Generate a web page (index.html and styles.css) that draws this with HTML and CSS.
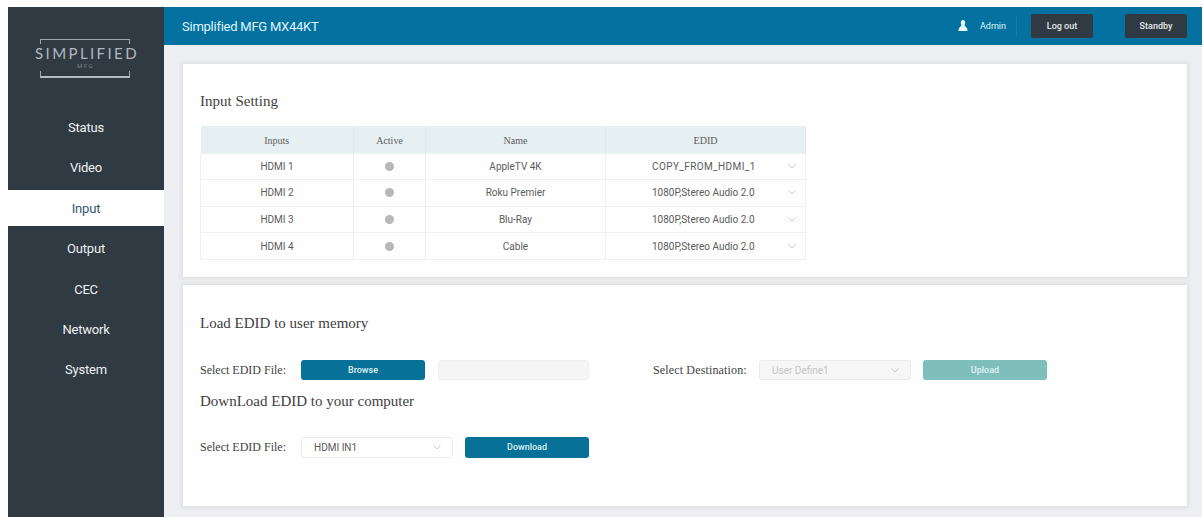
FILE: index.html
```html
<!DOCTYPE html>
<html lang="en">
<head>
    <meta charset="UTF-8">
    <meta name="viewport" content="width=device-width, initial-scale=1.0">
    <title>Simplified MFG MX44KT</title>
    <link rel="stylesheet" href="styles.css">
</head>
<body>
    <div class="app">
        <aside class="sidebar">
            <div class="logo">
                <div class="bracket bracket-top"></div>
                <div class="logo-name">SIMPLIFIED</div>
                <div class="logo-sub">MFG</div>
                <div class="bracket bracket-bottom"></div>
            </div>
            <nav class="menu">
                <a class="menu-item">Status</a>
                <a class="menu-item">Video</a>
                <a class="menu-item active">Input</a>
                <a class="menu-item">Output</a>
                <a class="menu-item">CEC</a>
                <a class="menu-item">Network</a>
                <a class="menu-item">System</a>
            </nav>
        </aside>

        <div class="main">
            <header class="topbar">
                <div class="title">Simplified MFG MX44KT</div>
                <svg class="user-icon" width="10" height="12" viewBox="0 0 10 12">
                    <path d="M5 0C3.500 0 2.800 1.100 2.800 2.500c0 1.200.5 2 .7 2.700L1.200 8C.6 8.800.5 10 .5 11h9c0-1-.1-2.200-.7-3L6.500 5.200c.2-.7.7-1.500.7-2.700C7.200 1.100 6.500 0 5 0z" fill="#e4f8fb"/>
                </svg>
                <span class="user-name">Admin</span>
                <button class="top-btn">Log out</button>
                <button class="top-btn standby">Standby</button>
            </header>

            <div class="content">
                <section class="card input-card">
                    <h2>Input Setting</h2>
                    <table class="input-table">
                        <colgroup>
                            <col class="col-input">
                            <col class="col-active">
                            <col class="col-name">
                            <col class="col-edid">
                        </colgroup>
                        <thead>
                            <tr><th>Inputs</th><th>Active</th><th>Name</th><th>EDID</th></tr>
                        </thead>
                        <tbody>
                            <tr>
                                <td>HDMI 1</td>
                                <td><span class="dot"></span></td>
                                <td>AppleTV 4K</td>
                                <td><div class="edid"><span class="copy">COPY_FROM_HDMI_1</span><svg class="chevron" width="8" height="5" viewBox="0 0 8 5"><path d="M0.500 0.500L4 4l3.500-3.500"/></svg></div></td>
                            </tr>
                            <tr>
                                <td>HDMI 2</td>
                                <td><span class="dot"></span></td>
                                <td>Roku Premier</td>
                                <td><div class="edid"><span>1080P,Stereo Audio 2.0</span><svg class="chevron" width="8" height="5" viewBox="0 0 8 5"><path d="M0.500 0.500L4 4l3.500-3.500"/></svg></div></td>
                            </tr>
                            <tr>
                                <td>HDMI 3</td>
                                <td><span class="dot"></span></td>
                                <td>Blu-Ray</td>
                                <td><div class="edid"><span>1080P,Stereo Audio 2.0</span><svg class="chevron" width="8" height="5" viewBox="0 0 8 5"><path d="M0.500 0.500L4 4l3.500-3.500"/></svg></div></td>
                            </tr>
                            <tr>
                                <td>HDMI 4</td>
                                <td><span class="dot"></span></td>
                                <td>Cable</td>
                                <td><div class="edid"><span>1080P,Stereo Audio 2.0</span><svg class="chevron" width="8" height="5" viewBox="0 0 8 5"><path d="M0.500 0.500L4 4l3.500-3.500"/></svg></div></td>
                            </tr>
                        </tbody>
                    </table>
                </section>

                <section class="card edid-card">
                    <h2>Load EDID to user memory</h2>
                    <div class="form-row">
                        <label class="file-label">Select EDID File:</label>
                        <button class="btn browse">Browse</button>
                        <div class="file-box"></div>
                        <label class="dest-label">Select Destination:</label>
                        <div class="select disabled"><span>User Define1</span><svg class="chevron" width="8" height="5" viewBox="0 0 8 5"><path d="M0.500 0.500L4 4l3.500-3.500"/></svg></div>
                        <button class="btn upload">Upload</button>
                    </div>
                    <h2 class="download-title">DownLoad EDID to your computer</h2>
                    <div class="form-row download-row">
                        <label class="file-label">Select EDID File:</label>
                        <div class="select"><span>HDMI IN1</span><svg class="chevron" width="8" height="5" viewBox="0 0 8 5"><path d="M0.500 0.500L4 4l3.500-3.500"/></svg></div>
                        <button class="btn download">Download</button>
                    </div>
                </section>
            </div>
        </div>
    </div>
</body>
</html>
```
FILE: styles.css
```css
* {
    box-sizing: border-box;
}
body {
    margin: 0;
    padding: 7px 1px 0 8px;
    height: 517px;
    overflow: hidden;
    background-color: #fff;
    font-family: Roboto, "Liberation Sans", sans-serif;
}
.app {
    display: flex;
    height: 510px;
}
.sidebar {
    width: 156px;
    background-color: #303a43;
    flex-shrink: 0;
}
.logo {
    height: 102px;
    padding-top: 32px;
    display: flex;
    flex-direction: column;
    align-items: center;
    color: #b0b8be;
}
.bracket {
    width: 90px;
    height: 5px;
    border: 1px solid #a0a8ae;
    margin-right: 3px;
}
.bracket-top {
    border-bottom: none;
}
.bracket-bottom {
    height: 7px;
    margin-top: 2px;
    border-top: none;
    border-bottom: 2px solid #b5bbc1;
}
.logo-name {
    font-family: Lato, sans-serif;
    font-size: 15px;
    line-height: 19px;
    letter-spacing: 2.4px;
    margin-right: -2px;
}
.logo-sub {
    font-size: 6px;
    line-height: 6px;
    letter-spacing: 1.5px;
    margin-right: 1px;
    color: #78828a;
}
.menu {
    display: flex;
    flex-direction: column;
    gap: 4.4px;
}
.menu-item {
    height: 36px;
    line-height: 38px;
    text-align: center;
    font-size: 13px;
    letter-spacing: -0.2px;
    color: #eef1f3;
}
.menu-item.active {
    background-color: #fff;
    color: #34566b;
}
.main {
    flex: 1;
    display: flex;
    flex-direction: column;
    background-color: #eeeff3;
}
.topbar {
    height: 38px;
    padding: 0 15px 0 18px;
    display: flex;
    align-items: center;
    background-color: #0571a0;
    color: #dff5fb;
}
.title {
    font-size: 13px;
    letter-spacing: -0.25px;
    margin-right: auto;
}
.user-name {
    width: 37px;
    margin: 0 14px 0 12px;
    font-size: 9px;
    line-height: 20px;
    border-right: 1px solid #1a7ca6;
}
.top-btn {
    width: 62px;
    height: 24px;
    padding: 0;
    border: none;
    border-radius: 2px;
    background-color: #303a43;
    color: #e4e8ea;
    font: 500 9px Roboto, sans-serif;
}
.standby {
    margin-left: 32px;
}
.content {
    padding: 19px 15px 0 19px;
}
.card {
    background-color: #fefefe;
    padding: 0 17px;
    box-shadow: 0 0 4px 2px #e0e0e1;
}
.input-card {
    height: 213px;
    padding-top: 27px;
    margin-bottom: 8px;
}
.edid-card {
    height: 221px;
    padding-top: 28px;
}
h2 {
    margin: 0;
    font: 400 15px/20px "Liberation Serif", serif;
    color: #3f3f3f;
}
.input-table {
    width: 605px;
    margin-top: 15px;
    table-layout: fixed;
    border-collapse: collapse;
    color: #5c5c5c;
    font-size: 10px;
    text-align: center;
}
.col-input {
    width: 153px;
}
.col-active {
    width: 72px;
}
.col-name {
    width: 180px;
}
.col-edid {
    width: 200px;
}
.input-table th {
    height: 27px;
    padding: 2px 0 0;
    background-color: #e6f0f2;
    border-right: 1px solid #e0eaec;
    font: 400 10px "Liberation Serif", serif;
}
.input-table td {
    height: 26.600px;
    padding: 0;
    border: 1px solid #f2f1f2;
}
.dot {
    display: block;
    width: 9px;
    height: 9px;
    margin: 0 auto;
    border-radius: 50%;
    background-color: #b8b8b8;
}
.edid {
    display: flex;
    align-items: center;
    justify-content: space-between;
    padding: 0 9px 0 46px;
}
.copy {
    letter-spacing: 0.4px;
}
.chevron {
    fill: none;
    stroke: #cacaca;
}
.form-row {
    display: flex;
    align-items: center;
    height: 20px;
    margin-top: 27px;
}
label {
    font: 12px "Liberation Serif", serif;
    color: #444;
    white-space: nowrap;
}
.file-label {
    width: 101px;
}
.dest-label {
    width: 106px;
    margin-left: 64px;
    letter-spacing: 0.15px;
}
.btn {
    width: 124px;
    height: 20px;
    padding: 0;
    border: none;
    border-radius: 3px;
    background-color: #087197;
    color: #dff3f8;
    font: 500 9px Roboto, sans-serif;
}
.file-box {
    width: 151px;
    height: 20px;
    margin-left: 13px;
    border: 1px solid #efefef;
    border-radius: 3px;
    background-color: #f5f5f5;
}
.select {
    width: 152px;
    height: 21px;
    padding: 0 11px 0 12px;
    display: flex;
    align-items: center;
    justify-content: space-between;
    border: 1px solid #ebebeb;
    border-radius: 3px;
    background-color: #fff;
    color: #5a5a5a;
    font-size: 10px;
}
.select.disabled {
    height: 20px;
    background-color: #f6f6f6;
    color: #c4c4c4;
}
.upload {
    margin-left: 12px;
    background-color: #7fbfbb;
}
.download-title {
    margin-top: 11px;
}
.download-row {
    margin-top: 26px;
}
.download {
    margin-left: 12px;
    height: 21px;
}
```
